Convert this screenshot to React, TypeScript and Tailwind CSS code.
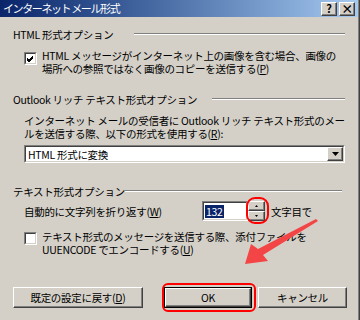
const raised =
  "border border-t-white border-l-white border-r-[#404040] border-b-[#404040] shadow-[inset_-1px_-1px_0_#808080] bg-[#d4d0c8]";

// sunken field: two nested 1px borders
const Sunken = ({ className = "", children }: { className?: string; children?: React.ReactNode }) => (
  <div className={`border border-t-[#808080] border-l-[#808080] border-r-white border-b-white ${className}`}>
    <div className="w-full h-full border border-t-[#404040] border-l-[#404040] border-r-[#d4d0c8] border-b-[#d4d0c8] bg-white flex items-center">
      {children}
    </div>
  </div>
);

const Header = ({ label, w, end, className = "" }: { label: string; w: string; end: string; className?: string }) => (
  <div className={`flex items-center h-[13px] ${className}`}>
    <span className={`${w} shrink-0 whitespace-nowrap`}>{label}</span>
    <div className={`flex-1 ${end} mt-[-1px] border-t border-t-[#808080] border-b border-b-white`} />
  </div>
);

const Check = ({ checked, className = "" }: { checked?: boolean; className?: string }) => (
  <Sunken className={`w-[13px] h-[13px] shrink-0 ${className}`}>
    {checked && (
      <svg viewBox="0 0 9 9" className="w-[9px] h-[9px]">
        <path d="M1 4 L3 6 L7 2 M1 5 L3 7 L7 3 M1 6 L3 8 L7 4" stroke="#000" strokeWidth="1" fill="none" />
      </svg>
    )}
  </Sunken>
);

const U = ({ children }: { children: React.ReactNode }) => <span className="underline underline-offset-1">{children}</span>;

export default function App() {
  return (
    <div className="relative w-[360px] h-[320px] overflow-hidden bg-[#d4d0c8] text-black text-[10.5px] leading-[13px] tracking-[-0.3px] font-['Noto_Sans_CJK_JP','Noto_Sans',sans-serif] shadow-[inset_-1px_0_0_#404040,inset_-2px_0_0_#808080]">
      {/* title bar */}
      <div className="h-[17px] mr-[2px] flex items-center justify-between bg-gradient-to-r from-[#0a246a] to-[#a6caf0] pl-[3px] pr-[3px]">
        <span className="text-white text-[11px] tracking-[-1.4px] whitespace-nowrap">インターネット メール形式</span>
        <div className="flex gap-[2px]">
          <div className={`${raised} w-[16px] h-[14px] flex items-center justify-center text-[11px] font-bold leading-none`}>?</div>
          <div className={`${raised} w-[16px] h-[14px] flex items-center justify-center text-[12px] font-bold leading-none`}>×</div>
        </div>
      </div>

      <div className="pl-[13px] pr-[2px] flex flex-col">
        <Header label="HTML 形式オプション" w="w-[121px]" end="mr-[13px]" className="mt-[11px]" />

        <div className="mt-[8px] ml-[11px] flex gap-[5px]">
          <Check checked className="mt-[3px]" />
          <div className="whitespace-nowrap">
            <div>HTML メッセージがインターネット上の画像を含む場合、画像の</div>
            <div>場所への参照ではなく画像のコピーを送信する(<U>P</U>)</div>
          </div>
        </div>

        <Header label="Outlook リッチ テキスト形式オプション" w="w-[199px]" end="mr-[13px]" className="mt-[18px]" />

        <div className="mt-[8px] ml-[11px] whitespace-nowrap">
          <div>インターネット メールの受信者に Outlook リッチ テキスト形式のメー</div>
          <div>ルを送信する際、以下の形式を使用する(<U>R</U>):</div>
        </div>

        <Sunken className="mt-[5px] ml-[11px] mr-[13px] h-[18px]">
          <span className="flex-1 pl-[2px] whitespace-nowrap">HTML 形式に変換</span>
          <div className={`${raised} w-[16px] h-full flex items-center justify-center`}>
            <svg viewBox="0 0 7 4" className="w-[7px] h-[4px]">
              <path d="M0 0 H7 L3.5 4 Z" fill="#000" />
            </svg>
          </div>
        </Sunken>

        <Header label="テキスト形式オプション" w="w-[112px]" end="mr-[16px]" className="mt-[22px]" />

        <div className="mt-[3px] ml-[11px] flex items-center h-[20px]">
          <span className="w-[178px] shrink-0 whitespace-nowrap">
            自動的に文字列を折り返す(<U>W</U>)
          </span>
          <Sunken className="w-[46px] h-[20px]">
            <span className="ml-[1px] px-[1px] bg-[#0a246a] text-white">132</span>
          </Sunken>
          <div className="relative w-[17px] h-[20px] flex flex-col">
            <div className={`${raised} h-[10px] flex items-center justify-center`}>
              <svg viewBox="0 0 3 2" className="w-[3px] h-[2px]"><path d="M1.5 0 L3 2 H0 Z" fill="#000" /></svg>
            </div>
            <div className={`${raised} h-[10px] flex items-center justify-center`}>
              <svg viewBox="0 0 3 2" className="w-[3px] h-[2px]"><path d="M0 0 H3 L1.5 2 Z" fill="#000" /></svg>
            </div>
            <div className="absolute left-[-2px] right-[-4px] top-[-4px] bottom-[-3px] border-2 border-[#ff0000] rounded-[9px]" />
          </div>
          <span className="ml-[6px] whitespace-nowrap">文字目で</span>
        </div>

        <div className="mt-[9px] ml-[11px] flex gap-[5px]">
          <Check className="mt-[2px]" />
          <div className="whitespace-nowrap">
            <div>テキスト形式のメッセージを送信する際、添付ファイルを</div>
            <div>UUENCODE でエンコードする(<U>U</U>)</div>
          </div>
        </div>

        <div className="mt-[31px] flex items-center">
          <button className={`${raised} w-[130px] h-[21px] flex items-center justify-center`}>
            既定の設定に戻す(<U>D</U>)
          </button>
          <div className="relative ml-[21px]">
            <div className="border border-black">
              <button className={`${raised} w-[86px] h-[19px] flex items-center justify-center`}>OK</button>
            </div>
            <div className="absolute left-[-2px] right-[-4px] top-[-4px] bottom-[-4px] border-2 border-[#ff0000] rounded-[6px]" />
          </div>
          <button className={`${raised} ml-[6px] w-[89px] h-[21px] flex items-center justify-center`}>キャンセル</button>
        </div>
      </div>

      {/* red arrow annotation */}
      <svg className="absolute inset-0 pointer-events-none" width="360" height="320" viewBox="0 0 360 320">
        <polygon points="316,219 318,221 263,255 268,261 245,264 251,244 258,249" fill="#f34545" />
      </svg>
    </div>
  );
}
